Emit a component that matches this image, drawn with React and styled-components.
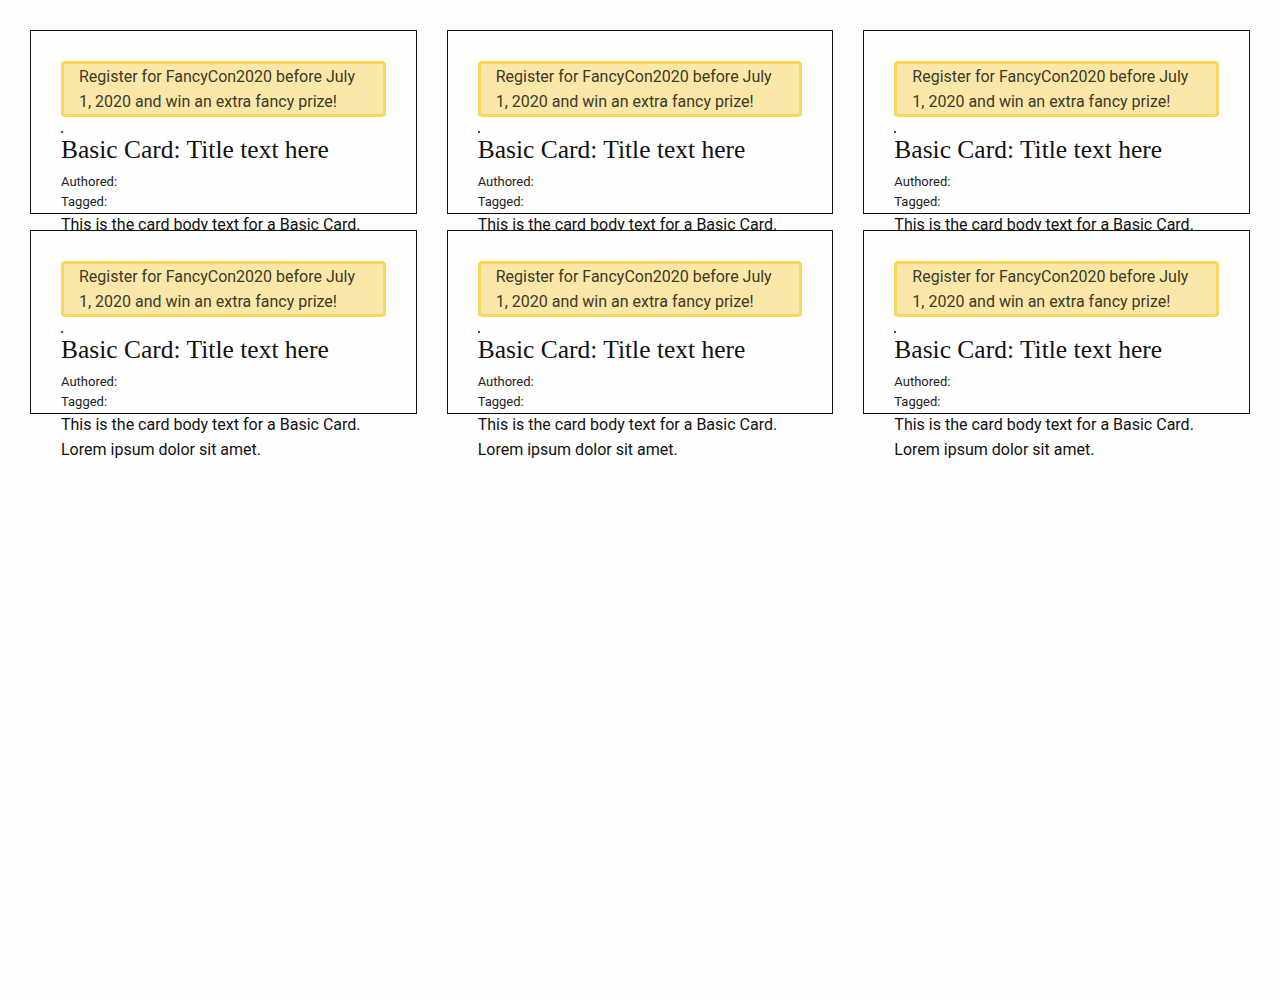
import styled, { createGlobalStyle } from "styled-components";

const GlobalStyle = createGlobalStyle`
  body {
    margin: 0;
    background: #fefefe;
    font-family: Roboto, "Noto Sans", sans-serif;
    color: #111;
  }
`;

// one basic card, repeated in the grid
const BasicCard = () => (
  <Card>
    <Banner>
      Register for FancyCon2020 before July 1, 2020 and win an extra fancy
      prize!
    </Banner>
    <Marker />
    <Title>Basic Card: Title text here</Title>
    <Meta>Authored:</Meta>
    <Meta>Tagged:</Meta>
    <Body>
      This is the card body text for a Basic Card. Lorem ipsum dolor sit amet.
    </Body>
  </Card>
);

const App = () => {
  const cards = [1, 2, 3, 4, 5, 6];

  return (
    <>
      <GlobalStyle />
      <Page>
        <Grid>
          {cards.map((id) => (
            <BasicCard key={id} />
          ))}
        </Grid>
      </Page>
    </>
  );
};

const Page = styled.div`
  box-sizing: border-box;
  min-height: 100vh;
  padding: 30px;
`;

const Grid = styled.div`
  display: grid;
  grid-template-columns: repeat(3, 1fr);
  column-gap: 30px;
  row-gap: 16px;
`;

const Card = styled.div`
  box-sizing: border-box;
  height: 184px;
  padding: 30px;
  border: 1px solid #111;
  background: #fefefe;
`;

const Banner = styled.div`
  border: 3px solid #f9d75e;
  border-radius: 4px;
  background: #fbe8a8;
  padding: 0 15px;
  font-size: 16px;
  line-height: 25px;
  color: #3b3826;
`;

const Marker = styled.div`
  width: 2px;
  height: 2px;
  margin-top: 14px;
  background: #b3262a;
`;

const Title = styled.h2`
  margin: 2px 0 7px;
  font-family: "Roboto Slab", "Liberation Serif", serif;
  font-weight: 400;
  font-size: 25.5px;
  line-height: 30px;
  color: #111;
`;

const Meta = styled.div`
  font-size: 13px;
  line-height: 20px;
  color: #222;
`;

const Body = styled.p`
  margin: 0;
  font-size: 16px;
  line-height: 25px;
  color: #111;
`;

export default App;
